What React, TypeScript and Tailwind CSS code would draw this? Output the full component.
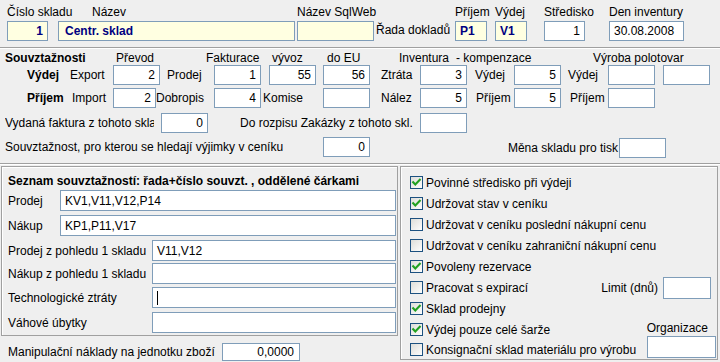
import React from "react";

type InpProps = {
  className: string;
  v?: string;
  right?: boolean;
  yellow?: boolean;
  navy?: boolean;
  children?: React.ReactNode;
};

function Inp({ className, v, right, yellow, navy, children }: InpProps) {
  const cls = [
    "flex items-center shrink-0 overflow-hidden whitespace-nowrap border border-[#7f9db9]",
    yellow ? "bg-[#ffffe1]" : "bg-white",
    right ? "justify-end pr-[4px]" : "pl-[4px]",
    navy ? "font-bold text-[#000080]" : "text-black",
    className,
  ].join(" ");
  return (
    <div className={cls}>
      {v}
      {children}
    </div>
  );
}

function Check({ checked }: { checked?: boolean }) {
  return (
    <svg width="13" height="13" viewBox="0 0 13 13" className="shrink-0">
      <defs>
        <linearGradient id="cbgrad" x1="0" y1="0" x2="1" y2="1">
          <stop offset="0" stopColor="#dcdcd7" />
          <stop offset="1" stopColor="#ffffff" />
        </linearGradient>
      </defs>
      <rect x="0.5" y="0.5" width="12" height="12" fill="url(#cbgrad)" stroke="#1c5180" />
      {checked && (
        <path d="M3.2 6.2 L5.3 8.4 L9.8 3.8" stroke="#21a121" strokeWidth="2.1" fill="none" strokeLinecap="square" />
      )}
    </svg>
  );
}

function Cb({ checked, label }: { checked?: boolean; label: string }) {
  return (
    <div className="flex items-center self-center">
      <Check checked={checked} />
      <span className="ml-[3px] whitespace-nowrap">{label}</span>
    </div>
  );
}

export default function App() {
  return (
    <div className="w-[720px] h-[362px] overflow-hidden bg-[#efefef] text-black text-[12px] leading-[14px] [font-family:'Liberation_Sans',Arial,sans-serif]">
      {/* Top section */}
      <div className="h-[47px] flex pl-[7px] pt-[5px]">
        <div className="w-[51px] shrink-0 flex flex-col">
          <div className="h-[16px] whitespace-nowrap">Číslo skladu</div>
          <Inp className="w-[41px] h-[20px]" v="1" right yellow navy />
        </div>
        <div className="w-[239px] shrink-0 flex flex-col">
          <div className="h-[16px] pl-[34px] whitespace-nowrap">Název</div>
          <Inp className="w-[237px] h-[20px] !pl-[6px]" v="Centr. sklad" yellow navy />
        </div>
        <div className="w-[79px] shrink-0 flex flex-col">
          <div className="h-[16px] whitespace-nowrap">Název SqlWeb</div>
          <Inp className="w-[77px] h-[20px]" yellow />
        </div>
        <div className="w-[79px] shrink-0 pt-[18px] whitespace-nowrap">Řada dokladů</div>
        <div className="w-[40px] shrink-0 flex flex-col">
          <div className="h-[16px] whitespace-nowrap">Příjem</div>
          <Inp className="w-[32px] h-[20px]" v="P1" yellow navy />
        </div>
        <div className="w-[49px] shrink-0 flex flex-col">
          <div className="h-[16px] whitespace-nowrap">Výdej</div>
          <Inp className="w-[32px] h-[20px]" v="V1" yellow navy />
        </div>
        <div className="w-[65px] shrink-0 flex flex-col">
          <div className="h-[16px] whitespace-nowrap">Středisko</div>
          <Inp className="w-[41px] h-[20px]" v="1" right />
        </div>
        <div className="shrink-0 flex flex-col">
          <div className="h-[16px] whitespace-nowrap">Den inventury</div>
          <Inp className="w-[75px] h-[20px]" v="30.08.2008" />
        </div>
      </div>
      <div className="h-[2px] border-t border-[#a0a0a0] bg-white" />

      {/* Souvztažnosti section */}
      <div className="h-[114px] pt-[2px] flex flex-col">
        <div className="h-[14px] flex pl-[5px] whitespace-nowrap">
          <div className="w-[111px] shrink-0 font-bold">Souvztažnosti</div>
          <div className="w-[90px] shrink-0">Převod</div>
          <div className="w-[66px] shrink-0">Fakturace</div>
          <div className="w-[55px] shrink-0">vývoz</div>
          <div className="w-[72px] shrink-0">do EU</div>
          <div className="w-[57px] shrink-0">Inventura</div>
          <div className="w-[137px] shrink-0">- kompenzace</div>
          <div className="shrink-0">Výroba polotovar</div>
        </div>
        <div className="h-[20px] flex items-center pl-[27px] whitespace-nowrap">
          <div className="w-[42px] shrink-0 font-bold">Výdej</div>
          <div className="w-[44px] shrink-0 pl-[1px]">Export</div>
          <Inp className="w-[47px] h-[20px]" v="2" right />
          <div className="w-[54px] shrink-0 pl-[7px]">Prodej</div>
          <Inp className="w-[47px] h-[20px]" v="1" right />
          <Inp className="w-[47px] h-[20px] ml-[8px]" v="55" right />
          <Inp className="w-[47px] h-[20px] ml-[7px]" v="56" right />
          <div className="w-[50px] shrink-0 pl-[11px]">Ztráta</div>
          <Inp className="w-[47px] h-[20px]" v="3" right />
          <div className="w-[47px] shrink-0 pl-[8px]">Výdej</div>
          <Inp className="w-[47px] h-[20px]" v="5" right />
          <div className="w-[47px] shrink-0 pl-[7px]">Výdej</div>
          <Inp className="w-[47px] h-[20px]" />
          <Inp className="w-[47px] h-[20px] ml-[8px]" />
        </div>
        <div className="h-[20px] mt-[3px] flex items-center pl-[27px] whitespace-nowrap">
          <div className="w-[44px] shrink-0 font-bold">Příjem</div>
          <div className="w-[42px] shrink-0 pl-[1px]">Import</div>
          <Inp className="w-[43px] h-[20px]" v="2" right />
          <div className="w-[58px] shrink-0">Dobropis</div>
          <Inp className="w-[47px] h-[20px]" v="4" right />
          <div className="w-[62px] shrink-0 pl-[2px]">Komise</div>
          <Inp className="w-[47px] h-[20px]" />
          <div className="w-[50px] shrink-0 pl-[11px]">Nález</div>
          <Inp className="w-[47px] h-[20px]" v="5" right />
          <div className="w-[47px] shrink-0 pl-[9px]">Příjem</div>
          <Inp className="w-[47px] h-[20px]" v="5" right />
          <div className="w-[47px] shrink-0 pl-[9px]">Příjem</div>
          <Inp className="w-[47px] h-[20px]" />
        </div>
        <div className="h-[20px] mt-[5px] flex items-center pl-[5px] whitespace-nowrap">
          <div className="w-[149px] shrink-0 overflow-hidden">Vydaná faktura z tohoto skladu</div>
          <Inp className="w-[47px] h-[20px] ml-[7px]" v="0" right />
          <div className="w-[212px] shrink-0 pl-[32px]">Do rozpisu Zakázky z tohoto skl.</div>
          <Inp className="w-[47px] h-[20px]" />
        </div>
        <div className="h-[20px] mt-[4px] flex items-center pl-[5px] whitespace-nowrap">
          <div className="w-[318px] shrink-0">Souvztažnost, pro kterou se hledají výjimky v ceníku</div>
          <Inp className="w-[47px] h-[20px]" v="0" right />
          <div className="w-[249px] shrink-0 text-right pr-[1px] mt-[2px]">Měna skladu pro tisk</div>
          <Inp className="w-[47px] h-[20px] mt-[2px]" />
        </div>
      </div>
      <div className="h-[2px] border-t border-[#a0a0a0] bg-white" />

      {/* Bottom section */}
      <div className="flex pt-[1px]">
        <div className="w-[400px] shrink-0 flex flex-col">
          <div className="ml-[1px] w-[397px] h-[170px] border border-[#a0a0a0] shadow-[inset_1px_1px_0_#fff] flex flex-col pl-[6px] pr-[1px] pt-[7px] whitespace-nowrap">
            <div className="h-[14px] font-bold">Seznam souvztažností: řada+číslo souvzt. , oddělené čárkami</div>
            <div className="h-[21px] mt-[2px] flex items-center">
              <div className="w-[52px] shrink-0">Prodej</div>
              <Inp className="flex-1 h-[21px]" v="KV1,V11,V12,P14" />
            </div>
            <div className="h-[21px] mt-[4px] flex items-center">
              <div className="w-[52px] shrink-0">Nákup</div>
              <Inp className="flex-1 h-[21px]" v="KP1,P11,V17" />
            </div>
            <div className="h-[21px] mt-[4px] flex items-center">
              <div className="w-[144px] shrink-0">Prodej z pohledu 1 skladu</div>
              <Inp className="flex-1 h-[21px]" v="V11,V12" />
            </div>
            <div className="h-[21px] mt-[2px] flex items-center">
              <div className="w-[144px] shrink-0">Nákup z pohledu 1 skladu</div>
              <Inp className="flex-1 h-[21px]" />
            </div>
            <div className="h-[21px] mt-[3px] flex items-center">
              <div className="w-[144px] shrink-0">Technologické ztráty</div>
              <Inp className="flex-1 h-[21px]">
                <span className="w-[1px] h-[14px] bg-black" />
              </Inp>
            </div>
            <div className="h-[21px] mt-[4px] flex items-center">
              <div className="w-[144px] shrink-0">Váhové úbytky</div>
              <Inp className="flex-1 h-[21px]" />
            </div>
          </div>
          <div className="h-[18px] mt-[7px] flex items-center whitespace-nowrap">
            <div className="w-[222px] shrink-0 pl-[8px]">Manipulační náklady na jednotku zboží</div>
            <Inp className="w-[78px] h-[18px] !pr-[5px]" v="0,0000" right />
          </div>
        </div>

        <div className="w-[318px] h-[194px] shrink-0 border border-[#a0a0a0] shadow-[inset_1px_1px_0_#fff] flex flex-col pl-[9px] pt-[5px] whitespace-nowrap">
          <div className="h-[21px] flex"><Cb checked label="Povinné středisko při výdeji" /></div>
          <div className="h-[21px] flex"><Cb checked label="Udržovat stav v ceníku" /></div>
          <div className="h-[21px] flex"><Cb label="Udržovat v ceníku poslední nákupní cenu" /></div>
          <div className="h-[21px] flex"><Cb label="Udržovat v ceníku zahraniční nákupní cenu" /></div>
          <div className="h-[21px] flex"><Cb checked label="Povoleny rezervace" /></div>
          <div className="h-[21px] flex items-center pr-[6px]">
            <Cb label="Pracovat s expirací" />
            <div className="ml-auto">Limit (dnů)</div>
            <Inp className="w-[48px] h-[22px] ml-[5px]" />
          </div>
          <div className="h-[21px] flex"><Cb checked label="Sklad prodejny" /></div>
          <div className="h-[21px] flex pr-[9px]">
            <Cb checked label="Výdej pouze celé šarže" />
            <div className="ml-auto self-start mt-[2px]">Organizace</div>
          </div>
          <div className="h-[19px] flex pr-[1px]">
            <Cb label="Konsignační sklad materiálu pro výrobu" />
            <Inp className="w-[69px] h-[22px] ml-auto self-start -mt-[4px]" />
          </div>
        </div>
      </div>
    </div>
  );
}
